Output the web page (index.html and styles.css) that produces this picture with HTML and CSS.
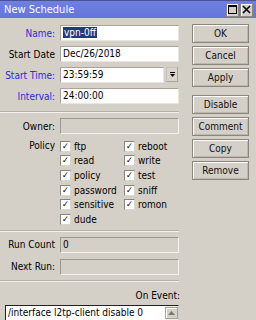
FILE: index.html
```html
<!DOCTYPE html>
<html lang="en">
<head>
    <meta charset="UTF-8">
    <meta name="viewport" content="width=device-width, initial-scale=1.0">
    <title>New Schedule</title>
    <link rel="stylesheet" href="styles.css">
</head>
<body>
    <div class="window">
        <div class="titlebar">
            <span class="title">New Schedule</span>
            <div class="title-btns">
                <span class="tbtn">
                    <svg width="9" height="9" viewBox="0 0 9 9"><rect x="0.5" y="0.5" width="8" height="8" fill="none" stroke="#000"/><line x1="0" y1="1.5" x2="9" y2="1.5" stroke="#000"/></svg>
                </span>
                <span class="tbtn">
                    <svg width="9" height="9" viewBox="0 0 9 9"><path d="M1 1 L8 8 M8 1 L1 8" stroke="#000" stroke-width="1.6"/></svg>
                </span>
            </div>
        </div>

        <div class="content">
            <div class="form">
                <div class="row">
                    <span class="lbl link">Name:</span>
                    <div class="field"><span class="sel">vpn-0ff</span></div>
                </div>
                <div class="row">
                    <span class="lbl">Start Date</span>
                    <div class="field">Dec/26/2018</div>
                </div>
                <div class="row">
                    <span class="lbl link">Start Time:</span>
                    <div class="field-wrap">
                        <div class="field">23:59:59</div>
                        <span class="drop">
                            <svg width="5" height="6" viewBox="0 0 5 6"><line x1="0" y1="0.5" x2="5" y2="0.5" stroke="#000"/><path d="M0 2 L5 2 L2.5 5 Z" fill="#000"/></svg>
                        </span>
                    </div>
                </div>
                <div class="row">
                    <span class="lbl link">Interval:</span>
                    <div class="field">24:00:00</div>
                </div>

                <div class="sep sep-a"></div>

                <div class="row">
                    <span class="lbl">Owner:</span>
                    <div class="field off"></div>
                </div>

                <div class="policy">
                    <span class="lbl">Policy</span>
                    <div class="checks">
                        <label class="chk"><span class="box">&#10003;</span>ftp</label>
                        <label class="chk"><span class="box">&#10003;</span>reboot</label>
                        <label class="chk"><span class="box">&#10003;</span>read</label>
                        <label class="chk"><span class="box">&#10003;</span>write</label>
                        <label class="chk"><span class="box">&#10003;</span>policy</label>
                        <label class="chk"><span class="box">&#10003;</span>test</label>
                        <label class="chk"><span class="box">&#10003;</span>password</label>
                        <label class="chk"><span class="box">&#10003;</span>sniff</label>
                        <label class="chk"><span class="box">&#10003;</span>sensitive</label>
                        <label class="chk"><span class="box">&#10003;</span>romon</label>
                        <label class="chk"><span class="box">&#10003;</span>dude</label>
                    </div>
                </div>

                <div class="sep sep-b"></div>

                <div class="row run">
                    <span class="lbl">Run Count</span>
                    <div class="field off">0</div>
                </div>
                <div class="row">
                    <span class="lbl">Next Run:</span>
                    <div class="field off"></div>
                </div>

                <div class="sep sep-c"></div>

                <div class="event-lbl">On Event:</div>
                <div class="event">
                    <span class="event-text">/interface l2tp-client disable 0</span>
                    <div class="scroll">
                        <span class="scroll-up">
                            <svg width="7" height="4" viewBox="0 0 7 4"><path d="M0 4 L3.5 0 L7 4 Z" fill="#777"/></svg>
                        </span>
                    </div>
                </div>
            </div>

            <div class="buttons">
                <button class="btn">OK</button>
                <button class="btn">Cancel</button>
                <button class="btn">Apply</button>
                <button class="btn gap">Disable</button>
                <button class="btn">Comment</button>
                <button class="btn">Copy</button>
                <button class="btn">Remove</button>
            </div>
        </div>
    </div>
</body>
</html>
```

FILE: styles.css
```css
body {
    margin: 0;
    padding: 0;
    background-color: #d4d0c8;
    font-family: 'DejaVu Sans Condensed', 'DejaVu Sans', sans-serif;
    font-stretch: condensed;
    font-size: 10px;
    color: #000;
    overflow: hidden;
}

.window {
    width: 256px;
    height: 320px;
    overflow: hidden;
}

.titlebar {
    height: 17px;
    border-top: 1px solid #4a5296;
    background: linear-gradient(#6f7fe2, #6576da);
    display: flex;
    align-items: center;
    justify-content: space-between;
    padding: 0 3px 0 4px;
}

.title {
    color: #fff;
    font-size: 11px;
}

.title-btns {
    display: flex;
    gap: 1px;
}

.tbtn {
    width: 11px;
    height: 12px;
    background-color: #d4d0c8;
    border: 1px solid #888;
    box-shadow: inset 1px 1px #fff;
    display: flex;
    align-items: center;
    justify-content: center;
}

.content {
    display: flex;
}

.form {
    width: 180px;
    padding-top: 7px;
}

.row {
    display: flex;
    align-items: center;
    height: 16px;
    margin-bottom: 5px;
}

.row.run {
    margin-bottom: 6px;
}

.lbl {
    width: 55px;
    margin-right: 5px;
    text-align: right;
    white-space: nowrap;
    flex-shrink: 0;
}

.link {
    color: #2b2bd6;
}

.field {
    flex: 1;
    height: 16px;
    box-sizing: border-box;
    background-color: #fff;
    border: 1px solid #a8a49c;
    border-right-color: #e8e6e0;
    border-bottom-color: #e8e6e0;
    padding-left: 2px;
    line-height: 14px;
    margin-right: 1px;
}

.field.off {
    background-color: #d4d0c8;
    border-color: #9c988f;
    border-right-color: #f4f2ee;
    border-bottom-color: #f4f2ee;
}

.sel {
    background-color: #24397a;
    color: #fff;
    padding: 0 1px;
}

.field-wrap {
    flex: 1;
    display: flex;
    gap: 2px;
    margin-right: 2px;
}

.field-wrap .field {
    margin-right: 0;
}

.drop {
    width: 12px;
    height: 15px;
    box-sizing: border-box;
    border: 1px solid #c4c0b8;
    border-right-color: #a8a49c;
    border-bottom-color: #a8a49c;
    background-color: #d8d4cc;
    display: flex;
    align-items: center;
    justify-content: center;
}

.sep {
    border-top: 1px solid #b4b0a8;
    border-bottom: 1px solid #f4f2ee;
    margin-right: 1px;
}

.sep-a {
    margin-top: 7px;
    margin-bottom: 5px;
}

.policy {
    display: flex;
    align-items: flex-start;
    margin-top: 1px;
}

.policy .lbl {
    line-height: 14.6px;
}

.checks {
    display: grid;
    grid-template-columns: 64px 1fr;
    grid-auto-rows: 14.6px;
}

.chk {
    display: flex;
    align-items: center;
    gap: 3px;
}

.box {
    width: 11px;
    height: 11px;
    box-sizing: border-box;
    background-color: #fff;
    border: 1px solid #8a867e;
    border-right-color: #d8d6d0;
    border-bottom-color: #d8d6d0;
    font-size: 9px;
    font-weight: bold;
    line-height: 9px;
    text-align: center;
}

.sep-b {
    margin-top: 3px;
    margin-bottom: 5px;
}

.sep-c {
    margin-top: 2px;
}

.event-lbl {
    text-align: right;
    margin-top: 8px;
    line-height: 12px;
}

.event {
    margin: 3px 1px 0 5px;
    height: 20px;
    background-color: #fff;
    border: 1px solid #222;
    border-bottom: none;
    border-right-color: #ccc;
    display: flex;
    justify-content: space-between;
}

.event-text {
    padding: 1px 0 0 2px;
    white-space: nowrap;
    overflow: hidden;
}

.scroll {
    width: 13px;
    background-color: #eeece8;
    flex-shrink: 0;
}

.scroll-up {
    display: flex;
    align-items: center;
    justify-content: center;
    height: 10px;
    margin-top: 1px;
    background-color: #d4d0c8;
    border: 1px solid #a8a49c;
    box-shadow: inset 1px 1px #fff;
}

.buttons {
    display: flex;
    flex-direction: column;
    gap: 3px;
    padding: 6px 0 0 12px;
}

.btn {
    width: 57px;
    height: 19px;
    padding: 0;
    font-family: inherit;
    font-stretch: condensed;
    font-size: 10px;
    color: #111;
    background-color: #d4d0c8;
    border: 1px solid #8a867e;
    box-shadow: inset 1px 1px #fff, inset -1px -1px #bcb8b0;
}

.btn.gap {
    margin-top: 5px;
}
```
